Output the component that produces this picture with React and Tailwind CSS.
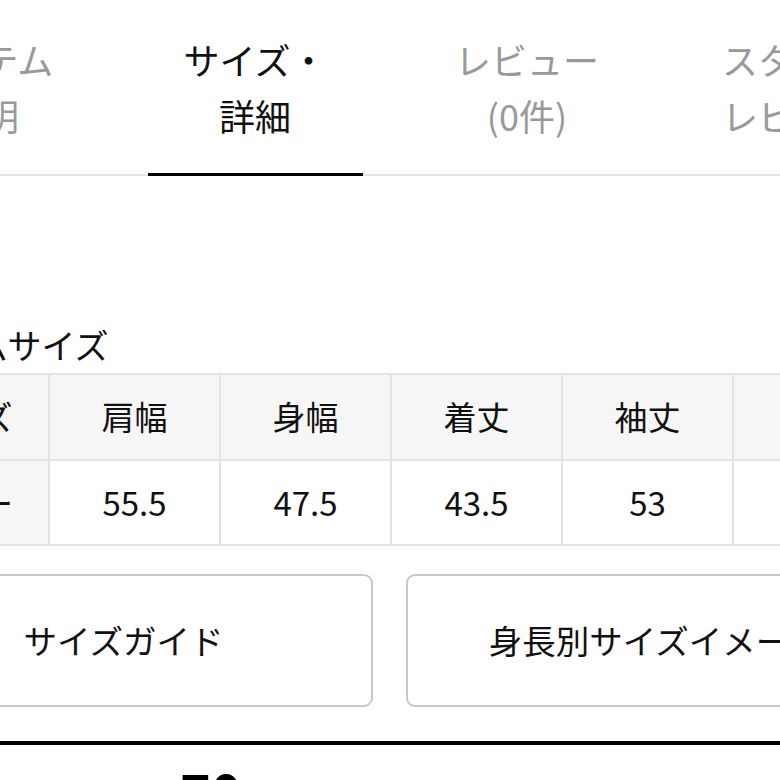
import React from "react";

const font = { fontFamily: '"Noto Sans CJK JP", "Noto Sans", sans-serif' };

function Tab({ w, lines, active }) {
  return (
    <div className={`${w} shrink-0 flex flex-col items-center`}>
      <div
        className={`pt-[31px] pb-[30px] text-[36px] leading-[56px] text-center ${
          active ? "text-[#111111]" : "text-[#999999]"
        }`}
      >
        {lines.map((l, i) => (
          <div key={i} className="whitespace-nowrap">{l}</div>
        ))}
      </div>
      <div className={`w-[215px] h-[3px] -mb-[2px] ${active ? "bg-black" : "bg-transparent"}`} />
    </div>
  );
}

export default function App() {
  const heads = ["サイズ", "肩幅", "身幅", "着丈", "袖丈", "裄丈"];
  const vals = ["フリー", "55.5", "47.5", "43.5", "53", ""];
  return (
    <div className="w-[780px] h-[780px] overflow-hidden bg-white" style={font}>
      <div className="w-[1100px] flex border-b-2 border-[#e6e6e6] -ml-[153px]">
        <Tab w="w-[272px]" lines={["アイテム", "説明"]} />
        <Tab w="w-[272px]" lines={["サイズ・", "詳細"]} active />
        <Tab w="w-[272px]" lines={["レビュー", "(0件)"]} />
        <Tab w="w-[262px]" lines={["スタッフ", "レビュー"]} />
      </div>

      <div className="-ml-[125px] w-[1100px]">
        <div className="mt-[145px] text-[34px] leading-[48px] text-[#111111] whitespace-nowrap">
          アイテムサイズ
        </div>

        <table className="mt-[4px] border-collapse text-[33px] text-[#111111] ml-[2px]">
          <tbody>
            <tr className="h-[86px]">
              {heads.map((h, i) => (
                <td
                  key={i}
                  className="w-[171px] min-w-[171px] border-2 border-[#e3e3e3] bg-[#f6f6f6] text-center align-middle whitespace-nowrap p-0"
                >
                  {h}
                </td>
              ))}
            </tr>
            <tr className="h-[85px]">
              {vals.map((v, i) => (
                <td
                  key={i}
                  className={`w-[171px] min-w-[171px] border-2 border-[#e3e3e3] text-center align-middle whitespace-nowrap p-0 ${
                    i === 0 ? "bg-[#f6f6f6]" : "bg-white"
                  }`}
                >
                  {v}
                </td>
              ))}
            </tr>
          </tbody>
        </table>

        <div className="mt-[28px] flex gap-[33px] -ml-[1px]">
          <div className="w-[499px] h-[133px] shrink-0 rounded-[9px] border-2 border-[#c8c8c8] flex items-center justify-center text-[33.5px] text-[#111111] whitespace-nowrap">
            サイズガイド
          </div>
          <div className="w-[499px] h-[133px] shrink-0 rounded-[9px] border-2 border-[#c8c8c8] flex items-center justify-center text-[33.5px] text-[#111111] whitespace-nowrap">
            身長別サイズイメージ
          </div>
        </div>
      </div>

      <div className="mt-[34px] h-[4px] w-[780px] bg-black" />
      <div className="ml-[180px] mt-[19px] text-[52px] leading-[52px] font-bold text-black">70</div>
    </div>
  );
}
